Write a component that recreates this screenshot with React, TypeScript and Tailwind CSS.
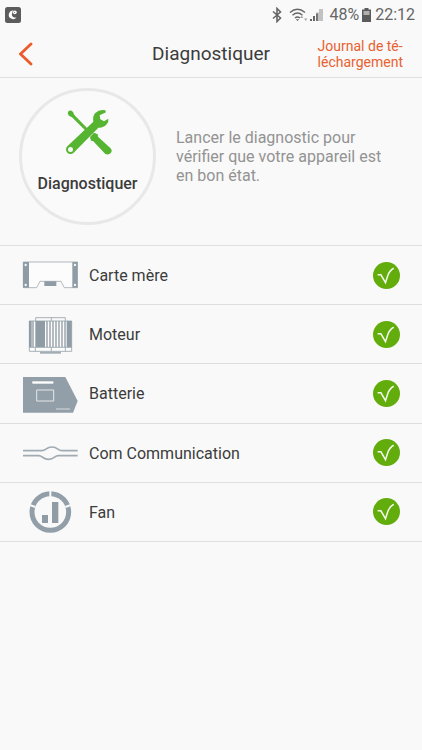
import type { ReactNode } from "react";

const COMPONENTS: { name: string; icon: ReactNode }[] = [
  { name: "Carte mère", icon: <BoardIcon /> },
  { name: "Moteur", icon: <MotorIcon /> },
  { name: "Batterie", icon: <BatteryPackIcon /> },
  { name: "Com Communication", icon: <CableIcon /> },
  { name: "Fan", icon: <FanIcon /> },
];

export default function App() {
  return (
    <div className="min-h-screen bg-[#f9f9f9] font-['Roboto',sans-serif] text-[#3c3c3c]">
      <StatusBar />

      <header className="grid h-12 grid-cols-[1fr_auto_1fr] items-center border-b border-[#dedede] px-[19px]">
        <button type="button" aria-label="Retour" className="w-4 justify-self-start text-[#ec5b2b]">
          <svg viewBox="1 0 16 26" className="h-[26px] w-4" fill="none" stroke="currentColor" strokeWidth="2.8" strokeLinecap="round">
            <path d="M13 3 2.500 13 13 23" />
          </svg>
        </button>
        <h1 className="text-[19px] leading-6">Diagnostiquer</h1>
        <a href="#journal" className="justify-self-end text-sm leading-4 text-[#e8612f]">
          Journal de té-
          <br />
          léchargement
        </a>
      </header>

      <main>
        <section className="flex items-center gap-5 px-[19px] pt-[10px] pb-5">
          <button
            type="button"
            className="flex size-[137px] shrink-0 flex-col items-center rounded-full border-[3px] border-[#e8e8e8] bg-[#fafafa] pt-[17px]"
          >
            <ToolsIcon />
            <span className="mt-[18px] text-base leading-5 font-medium">Diagnostiquer</span>
          </button>
          <p className="max-w-[214px] text-base leading-[19px] text-[#939393]">
            Lancer le diagnostic pour vérifier que votre appareil est en bon état.
          </p>
        </section>

        <ul className="grid min-h-[297px] auto-rows-fr border-t border-[#dedede]">
          {COMPONENTS.map((c) => (
            <li key={c.name} className="flex items-center gap-[11px] border-b border-[#dedede] px-[22px]">
              {c.icon}
              <span className="flex-1 pt-0.5 text-base leading-6">{c.name}</span>
              <CheckIcon />
            </li>
          ))}
        </ul>
      </main>
    </div>
  );
}

function StatusBar() {
  return (
    <div className="flex h-[30px] items-center justify-between pr-[7px] pl-[5px] text-[#666666]">
      <svg viewBox="0 0 16 16" className="size-4">
        <rect width="16" height="16" rx="2.500" fill="#5c5c5c" />
        <path d="M11.500 10.400A4.300 4.300 0 1 1 8.700 3.500 2.200 2.200 0 0 0 7.300 6C6 8.800 8.500 11.300 11.500 10.400Z" fill="#fff" />
        <circle cx="9.800" cy="5.300" r="1.900" fill="#fff" />
        <circle cx="9.600" cy="5.500" r=".6" fill="#777" />
      </svg>
      <div className="flex items-center">
        <svg viewBox="0 0 10 16" className="h-4 w-[10px]" fill="none" stroke="currentColor" strokeWidth="1.600">
          <path d="M1 4.500 8.500 11 5 14.500V1.500L8.500 5 1 11.500" />
        </svg>
        <svg viewBox="0 0 20 16" className="ml-[7px] h-4 w-5" fill="none" stroke="currentColor" strokeWidth="1.400">
          <path d="M1 5.500Q8.500-1 16 5.500M3.500 8.300Q8.500 3.800 13.500 8.300M6 11Q8.500 8.800 11 11" />
          <path d="m6.800 12.200 1.700 1.800 1.700-1.800Z" fill="currentColor" stroke="none" />
          <path d="m11 11 1.700-2.500 1.700 2.500ZM15 11.500h3.400L16.700 14Z" fill="#a8a8a8" stroke="none" />
        </svg>
        <svg viewBox="0 0 14 14" className="h-[14px] w-[14px]">
          <path d="M1 11h2v2H1ZM4 8h2v5H4Z" fill="#666" />
          <path d="M7 4.500h3V13H7ZM10 1h4v12h-4Z" fill="#c2c2c2" />
          <path d="M7 5.500h2V13H7Z" fill="#777" />
        </svg>
        <span className="ml-1.5 text-base leading-5">48%</span>
        <svg viewBox="0 0 9 14" className="ml-[3px] h-[14px] w-[9px]">
          <path d="M2.500 0h4v1.500H9V14H0V1.500h2.500Z" fill="#5b5b5b" />
          <path d="M1.500 3h6v4h-6Z" fill="#b0b0b0" />
        </svg>
        <span className="ml-1 text-base leading-5">22:12</span>
      </div>
    </div>
  );
}

function ToolsIcon() {
  return (
    <svg viewBox="159 84 150 144" className="h-12 w-[50px]" fill="#55b531">
      <path d="M176 93q7-4 13 3l4 9 46 47-6 6-47-46-8-4q-8-8-2-15Z" />
      <path d="m240 171 12-13 11 5 1 7 37 34q7 7 2 14-6 8-17 4l-36-38-7-2Z" />
      <path
        fillRule="evenodd"
        d="M286 91Q268 87 256 99 247 108 250 125L172 199a13 13 0 1 0 19 19L265 143Q281 144 290 133 297 124 295 116L282 124 271 118 269 106 288 97ZM181.500 201a7.500 7.500 0 1 1 0 15 7.500 7.500 0 0 1 0-15Z"
      />
    </svg>
  );
}

function BoardIcon() {
  return (
    <svg viewBox="36 28 168 90" className="h-[30px] w-14 shrink-0">
      <path d="M40 34H203V111H163L153 92H90L80 111H40Z" fill="#fcfcfc" stroke="#a3abb1" strokeWidth="2.500" />
      <path d="M39 34H57V111H39ZM187 34H203V111H187ZM103 92H139V106H103Z" fill="#8f9ca5" />
      <g fill="#f9f9f9">
        <circle cx="47" cy="43" r="3.500" />
        <circle cx="47" cy="103" r="3.500" />
        <circle cx="195" cy="43" r="3.500" />
        <circle cx="195" cy="103" r="3.500" />
      </g>
    </svg>
  );
}

function MotorIcon() {
  return (
    <svg viewBox="36 192 168 120" className="h-10 w-14 shrink-0">
      <path d="M77 213V203H166V213M124 203V213" fill="none" stroke="#98a3ab" strokeWidth="2.500" />
      <path d="M58 213H185V304H58Z" fill="#fcfcfc" stroke="#98a3ab" strokeWidth="2.500" />
      <path
        d="M57 213H65V292H57ZM67 213H71V292H67ZM76 213H105V292H76ZM109 213H113V292H109ZM118 213H122V292H118ZM127 213H131V292H127ZM136 213H140V292H136ZM145 213H149V292H145ZM154 213H158V292H154ZM163 213H167V292H163ZM170 213H185V292H170Z"
        fill="#8f9ca5"
      />
      <path d="M58 292H185M76 292V304M124 292V304M166 292V304" fill="none" stroke="#98a3ab" strokeWidth="2.500" />
      <path d="M90 305H153V311H90Z" fill="#a3adb4" />
    </svg>
  );
}

function BatteryPackIcon() {
  return (
    <svg viewBox="36 24 168 120" className="h-10 w-14 shrink-0">
      <path d="M39 36H166L203 108 189 143H39Z" fill="#939fa8" />
      <path d="M67 49H130V56H67Z" fill="#fff" />
      <path d="M80 75H131V108H80Z" fill="none" stroke="#e3e6e8" strokeWidth="3" />
      <path d="M138 132H180" stroke="#d5dadd" strokeWidth="3" />
    </svg>
  );
}

function CableIcon() {
  return (
    <svg viewBox="36 204 168 120" className="h-10 w-14 shrink-0" fill="none" stroke="#a0abb2" strokeWidth="5">
      <path d="M39 257H96C108 257 108 246 126 246S143 257 155 257H203" />
      <path d="M39 272H86C98 272 98 283 116 283S133 272 145 272H203" />
    </svg>
  );
}

function FanIcon() {
  return (
    <svg viewBox="36 39 168 144" className="h-12 w-14 shrink-0">
      <circle cx="121" cy="111" r="55" fill="none" stroke="#929fa8" strokeWidth="15" />
      <path d="M121 46V66M54 88 76 96M188 88 166 96" stroke="#f9f9f9" strokeWidth="6" />
      <path d="M96 120H114V144H96ZM126 81H145V144H126Z" fill="#8f9ca5" />
    </svg>
  );
}

function CheckIcon() {
  return (
    <svg viewBox="39 35 82 82" role="img" aria-label="OK" className="size-[27px] shrink-0">
      <circle cx="80" cy="76" r="41" fill="#62ad0c" />
      <path d="M53 74H63L77 98 84 76Q90 60 102 54" fill="none" stroke="#f4faee" strokeWidth="4.500" />
    </svg>
  );
}
